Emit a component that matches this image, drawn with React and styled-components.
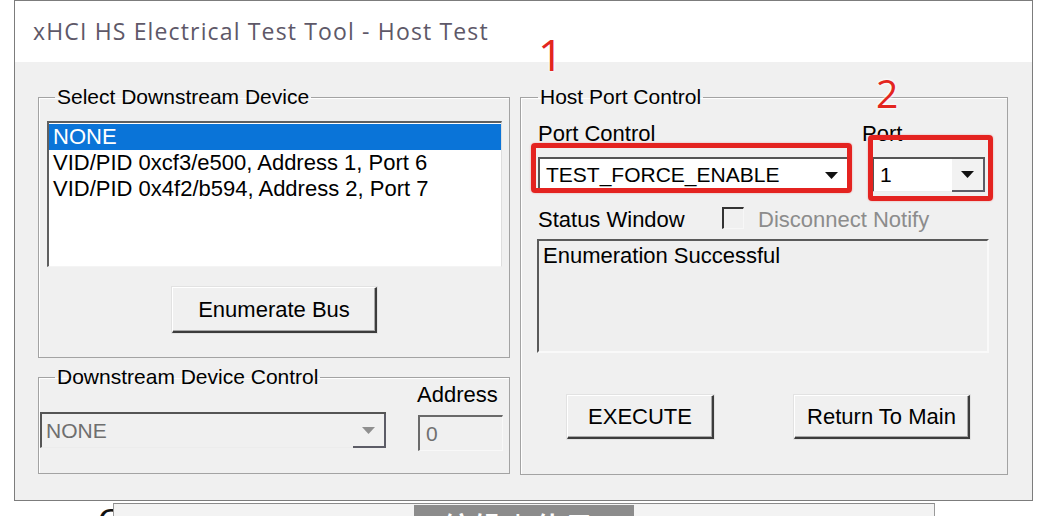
import styled, { createGlobalStyle } from "styled-components";

const GlobalStyle = createGlobalStyle`
  html, body {
    margin: 0;
    padding: 0;
    background: #ffffff;
  }
  body {
    font-family: "Liberation Sans", Arial, sans-serif;
    overflow: hidden;
  }
`;

const Arrow = ({ disabled }) => (
  <svg width="13" height="7" viewBox="0 0 13 7">
    <polygon points="0,0 13,0 6.5,7" fill={disabled ? "#8f8f8f" : "#111"} />
  </svg>
);

const App = () => {
  return (
    <Page>
      <GlobalStyle />
      <Window>
        <TitleBar>xHCI HS Electrical Test Tool - Host Test</TitleBar>
        <Client>
          <LeftColumn>
            <Group $padding="13px 7px 24px 8px">
              <Legend $offset="8px">Select Downstream Device</Legend>
              <ListBox>
                <ListItem $selected>NONE</ListItem>
                <ListItem>VID/PID 0xcf3/e500, Address 1, Port 6</ListItem>
                <ListItem>VID/PID 0x4f2/b594, Address 2, Port 7</ListItem>
              </ListBox>
              <ButtonRow>
                <Button $width="205px">Enumerate Bus</Button>
              </ButtonRow>
            </Group>
            <Group $padding="0 6px 22px 1px">
              <Legend $offset="15px">Downstream Device Control</Legend>
              <DeviceRow>
                <Combo $width="346px" $disabled>
                  <ComboText $disabled>NONE</ComboText>
                  <ComboButton $framed>
                    <Arrow disabled />
                  </ComboButton>
                </Combo>
                <AddressColumn>
                  <Label>Address</Label>
                  <Edit>0</Edit>
                </AddressColumn>
              </DeviceRow>
            </Group>
          </LeftColumn>

          <Group $padding="13px 18px 0 17px" $height="389px" $width="488px">
            <Legend $offset="0px">Host Port Control</Legend>
            <PortRow>
              <Field $width="309px">
                <Label>Port Control</Label>
                <Marked>
                  <Combo $width="309px">
                    <ComboText>TEST_FORCE_ENABLE</ComboText>
                    <ComboButton>
                      <Arrow />
                    </ComboButton>
                  </Combo>
                  <Highlight $top="-14px" $left="-7px" $right="-5px" $bottom="-1px" />
                </Marked>
              </Field>
              <Field>
                <Label>Port</Label>
                <Marked $indent="10px">
                  <Combo $width="113px">
                    <ComboText>1</ComboText>
                    <ComboButton $framed $shade>
                      <Arrow />
                    </ComboButton>
                  </Combo>
                  <Highlight $top="-22px" $left="-4px" $right="-8px" $bottom="-9px" />
                </Marked>
              </Field>
            </PortRow>
            <StatusRow>
              <StatusLabel>Status Window</StatusLabel>
              <CheckBox />
              <DisabledText>Disconnect Notify</DisabledText>
            </StatusRow>
            <StatusBox>Enumeration Successful</StatusBox>
            <ActionRow>
              <Button $width="147px" $height="44px">EXECUTE</Button>
              <Button $width="176px" $height="44px">Return To Main</Button>
            </ActionRow>
          </Group>
        </Client>

        <Marker $top="31px" $left="523px" $size="44px">1</Marker>
        <Marker $top="72px" $left="861px" $size="39px">2</Marker>
      </Window>

      <Behind>
        <Clipped>C</Clipped>
        <BehindPanel>
          <BehindTab>编辑 | 使用</BehindTab>
        </BehindPanel>
      </Behind>
    </Page>
  );
};

export default App;

const Page = styled.div`
  width: 1050px;
  height: 516px;
  overflow: hidden;
  background: #ffffff;
`;

const Window = styled.div`
  position: relative;
  box-sizing: border-box;
  margin-left: 14px;
  width: 1019px;
  height: 501px;
  border: 1px solid #7c7c7c;
  display: flex;
  flex-direction: column;
  background: #f0f0f0;
`;

const TitleBar = styled.div`
  height: 61px;
  box-sizing: border-box;
  padding: 15px 0 0 18px;
  background: #ffffff;
  font-family: "Open Sans", "Noto Sans", sans-serif;
  font-size: 23px;
  line-height: 30px;
  letter-spacing: 1.15px;
  color: #5e5868;
  white-space: nowrap;
`;

const Client = styled.div`
  flex: 1;
  display: flex;
  gap: 10px;
  padding: 24px 0 0 23px;
  background: #f0f0f0;
`;

const LeftColumn = styled.div`
  width: 472px;
  display: flex;
  flex-direction: column;
  gap: 8px;
`;

const Group = styled.fieldset`
  margin: 0;
  min-width: 0;
  box-sizing: border-box;
  width: ${(p) => p.$width || "auto"};
  height: ${(p) => p.$height || "auto"};
  padding: ${(p) => p.$padding};
  border: 1px solid #a3a3a3;
  box-shadow: inset 1px 1px 0 #ffffff;
`;

const Legend = styled.legend`
  margin-left: ${(p) => p.$offset};
  padding: 0 2px;
  font-size: 21px;
  line-height: 22px;
  color: #000000;
`;

const ListBox = styled.div`
  box-sizing: border-box;
  height: 146px;
  padding-top: 1px;
  background: #ffffff;
  border-top: 2px solid #5f5f5f;
  border-left: 2px solid #5f5f5f;
  border-right: 1px solid #dedede;
  border-bottom: 1px solid #f4f4f4;
`;

const ListItem = styled.div`
  height: 26px;
  padding-left: 4px;
  font-size: 22px;
  line-height: 26px;
  white-space: nowrap;
  color: ${(p) => (p.$selected ? "#ffffff" : "#000000")};
  background: ${(p) => (p.$selected ? "#0a74d8" : "transparent")};
`;

const ButtonRow = styled.div`
  display: flex;
  justify-content: center;
  margin-top: 20px;
`;

const Button = styled.button`
  box-sizing: border-box;
  width: ${(p) => p.$width};
  height: ${(p) => p.$height || "46px"};
  padding: 0;
  background: #f0f0f0;
  border-top: 1px solid #ffffff;
  border-left: 1px solid #ffffff;
  border-right: 2px solid #3c3c3c;
  border-bottom: 2px solid #3c3c3c;
  box-shadow: inset -1px -1px 0 #a8a8a8, 0 0 0 1px #e2e2e2;
  font-family: "Liberation Sans", Arial, sans-serif;
  font-size: 22px;
  color: #000000;
`;

const DeviceRow = styled.div`
  display: flex;
  align-items: flex-end;
  margin-top: -6px;
`;

const AddressColumn = styled.div`
  display: flex;
  flex-direction: column;
  gap: 7px;
  margin-left: 31px;
`;

const Label = styled.div`
  font-size: 22px;
  line-height: 26px;
  color: #000000;
  white-space: nowrap;
`;

const Edit = styled.div`
  box-sizing: border-box;
  width: 85px;
  height: 36px;
  margin-left: 1px;
  padding-left: 6px;
  background: #f0f0f0;
  border-top: 2px solid #6a6a6a;
  border-left: 2px solid #6a6a6a;
  border-right: 1px solid #f8f8f8;
  border-bottom: 1px solid #f8f8f8;
  font-size: 21px;
  line-height: 33px;
  color: #707070;
`;

const Combo = styled.div`
  box-sizing: border-box;
  width: ${(p) => p.$width};
  height: ${(p) => (p.$disabled ? "36px" : "35px")};
  margin-bottom: ${(p) => (p.$disabled ? "3px" : "0")};
  display: flex;
  align-items: stretch;
  background: ${(p) => (p.$disabled ? "#f0f0f0" : "#ffffff")};
  border-top: 2px solid #555555;
  border-left: 2px solid #555555;
  border-bottom: 1px solid #ececec;
`;

const ComboText = styled.div`
  flex: 1;
  display: flex;
  align-items: center;
  padding-left: ${(p) => (p.$disabled ? "4px" : "6px")};
  font-size: 21px;
  color: ${(p) => (p.$disabled ? "#6e6e6e" : "#000000")};
  white-space: nowrap;
`;

const ComboButton = styled.div`
  width: 31px;
  display: flex;
  align-items: center;
  justify-content: center;
  background: ${(p) => (p.$shade ? "#f2f2f2" : "transparent")};
  border-right: ${(p) => (p.$framed ? "2px solid #5c5c66" : "none")};
  border-bottom: ${(p) => (p.$framed ? "2px solid #5c5c66" : "none")};
  margin-bottom: ${(p) => (p.$framed ? "-1px" : "0")};
`;

const PortRow = styled.div`
  display: flex;
  gap: 15px;
`;

const Field = styled.div`
  width: ${(p) => p.$width || "auto"};
  display: flex;
  flex-direction: column;
  gap: 10px;
`;

const Marked = styled.div`
  position: relative;
  margin-left: ${(p) => p.$indent || "0"};
`;

const Highlight = styled.div`
  position: absolute;
  top: ${(p) => p.$top};
  left: ${(p) => p.$left};
  right: ${(p) => p.$right};
  bottom: ${(p) => p.$bottom};
  border: 5px solid #e42320;
  border-radius: 4px;
  box-shadow: 0 0 2px rgba(228, 35, 32, 0.4);
  pointer-events: none;
  z-index: 2;
`;

const StatusRow = styled.div`
  display: flex;
  align-items: center;
  margin-top: 15px;
  height: 26px;
`;

const StatusLabel = styled.div`
  width: 184px;
  font-size: 22px;
  line-height: 26px;
  color: #000000;
`;

const CheckBox = styled.div`
  box-sizing: border-box;
  width: 22px;
  height: 22px;
  margin-top: -4px;
  border-top: 2px solid #333333;
  border-left: 2px solid #333333;
  border-right: 1px solid #f7f7f7;
  border-bottom: 1px solid #f7f7f7;
`;

const DisabledText = styled.div`
  margin-left: 14px;
  font-size: 22px;
  color: #8c8c8c;
  white-space: nowrap;
`;

const StatusBox = styled.div`
  box-sizing: border-box;
  width: 452px;
  height: 114px;
  margin-top: 6px;
  margin-left: -1px;
  padding: 2px 0 0 4px;
  background: #efefef;
  border-top: 2px solid #5a5a5a;
  border-left: 2px solid #5a5a5a;
  border-right: 2px solid #f9f9f9;
  border-bottom: 2px solid #f9f9f9;
  font-size: 22px;
  line-height: 26px;
  color: #000000;
`;

const ActionRow = styled.div`
  display: flex;
  gap: 80px;
  margin-top: 42px;
  padding-left: 29px;
`;

const Marker = styled.div`
  position: absolute;
  top: ${(p) => p.$top};
  left: ${(p) => p.$left};
  font-family: "Open Sans", "Noto Sans", sans-serif;
  font-size: ${(p) => p.$size};
  line-height: ${(p) => p.$size};
  color: #e3261f;
  text-shadow: 0 0 3px #ffffff, 0 0 3px #ffffff;
  z-index: 3;
`;

const Behind = styled.div`
  display: flex;
  height: 15px;
  overflow: hidden;
  padding-left: 98px;
`;

const Clipped = styled.div`
  width: 15px;
  margin-top: 2px;
  font-size: 34px;
  line-height: 34px;
  color: #111111;
`;

const BehindPanel = styled.div`
  width: 822px;
  margin-top: 2px;
  padding-left: 300px;
  box-sizing: border-box;
  background: #f3f3f3;
  border-top: 1px solid #8a8a8a;
  border-left: 1px solid #9a9a9a;
  border-right: 1px solid #9a9a9a;
  display: flex;
`;

const BehindTab = styled.div`
  width: 220px;
  margin-top: 1px;
  padding-left: 30px;
  box-sizing: border-box;
  background: #8c8c8c;
  color: #ffffff;
  font-family: "Noto Sans CJK SC", sans-serif;
  font-weight: 700;
  font-size: 26px;
  line-height: 40px;
  letter-spacing: 4px;
  white-space: nowrap;
`;
